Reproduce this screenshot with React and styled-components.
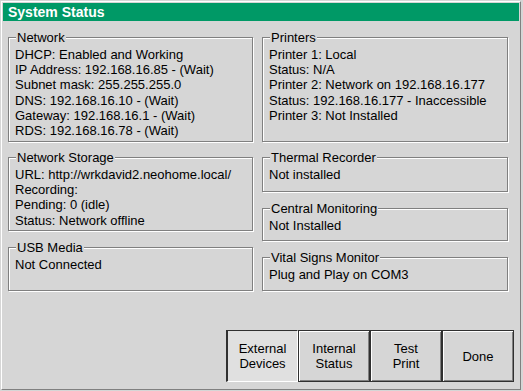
import React from 'react';
import styled, { createGlobalStyle } from 'styled-components';

const GlobalStyle = createGlobalStyle`
  html, body {
    margin: 0;
    padding: 0;
    background: #d6d6d6;
  }

  body {
    font-family: "Liberation Sans", Arial, sans-serif;
    font-size: 13px;
    color: #000;
  }
`;

const Window = styled.div`
  box-sizing: border-box;
  display: flex;
  flex-direction: column;
  width: 520px;
  height: 389px;
  margin: 1px 0 0 1px;
  padding: 1px;
  border-top: 1px solid #fff;
  border-left: 1px solid #fff;
  border-right: 1px solid #808080;
  border-bottom: 1px solid #808080;
`;

const TitleBar = styled.div`
  display: flex;
  align-items: center;
  height: 18px;
  padding-left: 5px;
  background: #009966;
  color: #fff;
  font-size: 14px;
  font-weight: bold;
`;

const Body = styled.div`
  display: grid;
  grid-template-columns: 245px 246px;
  column-gap: 9px;
  row-gap: 8px;
  padding: 9px 0 0 5px;
`;

const Stack = styled.div`
  display: flex;
  flex-direction: column;
  gap: 9px;
`;

const Group = styled.fieldset`
  box-sizing: border-box;
  height: ${(p) => p.$h}px;
  min-width: 0;
  margin: 0;
  padding: 2px 6px 0 6px;
  border: 1px solid #808080;
  box-shadow: inset 1px 1px 0 #fff, 1px 1px 0 #fff;
`;

const Legend = styled.legend`
  padding: 0 1px;
  margin-left: 1px;
  line-height: 15px;
  background: #d6d6d6;
`;

const Line = styled.div`
  line-height: 15.2px;
  white-space: nowrap;
`;

const Footer = styled.div`
  display: flex;
  justify-content: flex-end;
  margin-top: auto;
  padding: 0 5px 6px 0;
`;

const Button = styled.button`
  box-sizing: border-box;
  width: 72px;
  height: 52px;
  padding: 0;
  font-family: "Liberation Sans", Arial, sans-serif;
  font-size: 13px;
  line-height: 15px;
  color: #000;
  background: ${(p) => (p.$active ? '#e0e0e0' : '#d6d6d6')};
  border-style: solid;
  border-color: ${(p) => (p.$active ? '#303030 #fff #fff #303030' : '#303030')};
  border-width: ${(p) => (p.$active ? '1px 1px 1px 2px' : '1px')};
  box-shadow: ${(p) => (p.$active ? 'none' : 'inset 1px 1px 0 #fff, inset -1px -1px 0 #808080')};
`;

const Box = ({ title, h, lines }) => (
  <Group $h={h}>
    <Legend>{title}</Legend>
    {lines.map((l) => (
      <Line key={l}>{l}</Line>
    ))}
  </Group>
);

export default function App() {
  return (
    <>
      <GlobalStyle />
      <Window>
        <TitleBar>System Status</TitleBar>
        <Body>
          <Box
            title="Network"
            h={112}
            lines={[
              'DHCP: Enabled and Working',
              'IP Address: 192.168.16.85 - (Wait)',
              'Subnet mask: 255.255.255.0',
              'DNS: 192.168.16.10 - (Wait)',
              'Gateway: 192.168.16.1 - (Wait)',
              'RDS: 192.168.16.78 - (Wait)',
            ]}
          />
          <Box
            title="Printers"
            h={112}
            lines={[
              'Printer 1: Local',
              'Status: N/A',
              'Printer 2: Network on 192.168.16.177',
              'Status: 192.168.16.177 - Inaccessible',
              'Printer 3: Not Installed',
            ]}
          />
          <Stack>
            <Box
              title="Network Storage"
              h={81}
              lines={[
                'URL: http://wrkdavid2.neohome.local/',
                'Recording:',
                'Pending: 0 (idle)',
                'Status: Network offline',
              ]}
            />
            <Box title="USB Media" h={51} lines={['Not Connected']} />
          </Stack>
          <Stack>
            <Box title="Thermal Recorder" h={42} lines={['Not installed']} />
            <Box title="Central Monitoring" h={40} lines={['Not Installed']} />
            <Box title="Vital Signs Monitor" h={41} lines={['Plug and Play on COM3']} />
          </Stack>
        </Body>
        <Footer>
          <Button $active>External<br />Devices</Button>
          <Button>Internal<br />Status</Button>
          <Button>Test<br />Print</Button>
          <Button>Done</Button>
        </Footer>
      </Window>
    </>
  );
}
